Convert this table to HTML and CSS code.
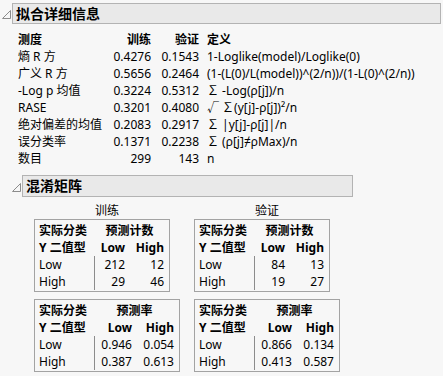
FILE: index.html
```html
<!DOCTYPE html>
<html>
<head>
<meta charset="utf-8">
<link rel="stylesheet" href="styles.css">
</head>
<body>
<div class="outline">
  <div class="ohead">
    <svg class="tri" width="10" height="9" viewBox="0 0 10 9"><polygon points="8.5,0.5 8.5,8.5 0.5,8.5" fill="none" stroke="#8c8c8c" stroke-width="1"/></svg>
    <div class="obar">拟合详细信息</div>
  </div>
  <div class="obody">
    <table class="fit">
      <tr class="hd"><td class="c1">测度</td><td class="c2">训练</td><td class="c3">验证</td><td class="c4">定义</td></tr>
      <tr><td class="c1">熵 R 方</td><td class="c2">0.4276</td><td class="c3">0.1543</td><td class="c4">1-Loglike(model)/Loglike(0)</td></tr>
      <tr><td class="c1">广义 R 方</td><td class="c2">0.5656</td><td class="c3">0.2464</td><td class="c4">(1-(L(0)/L(model))^(2/n))/(1-L(0)^(2/n))</td></tr>
      <tr><td class="c1">-Log p 均值</td><td class="c2">0.3224</td><td class="c3">0.5312</td><td class="c4">∑ -Log(ρ[j])/n</td></tr>
      <tr><td class="c1">RASE</td><td class="c2">0.3201</td><td class="c3">0.4080</td><td class="c4">√ ∑(y[j]-ρ[j])²/n</td></tr>
      <tr><td class="c1">绝对偏差的均值</td><td class="c2">0.2083</td><td class="c3">0.2917</td><td class="c4">∑ |y[j]-ρ[j]|/n</td></tr>
      <tr><td class="c1">误分类率</td><td class="c2">0.1371</td><td class="c3">0.2238</td><td class="c4">∑ (ρ[j]≠ρMax)/n</td></tr>
      <tr><td class="c1">数目</td><td class="c2">299</td><td class="c3">143</td><td class="c4">n</td></tr>
    </table>

    <div class="outline sub">
      <div class="ohead">
        <svg class="tri" width="10" height="9" viewBox="0 0 10 9"><polygon points="8.5,0.5 8.5,8.5 0.5,8.5" fill="none" stroke="#8c8c8c" stroke-width="1"/></svg>
        <div class="obar short">混淆矩阵</div>
      </div>
      <div class="cm-grid">
        <div class="cm-label">训练</div>
        <div class="cm-label">验证</div>

        <div class="mbox counts">
          <div class="b">实际分类</div><div class="b span">预测计数</div>
          <div class="b">Y 二值型</div><div class="b r">Low</div><div class="b r">High</div>
          <div class="sep">Low</div><div class="r">212</div><div class="r">12</div>
          <div class="sep">High</div><div class="r">29</div><div class="r">46</div>
        </div>
        <div class="mbox counts">
          <div class="b">实际分类</div><div class="b span">预测计数</div>
          <div class="b">Y 二值型</div><div class="b r">Low</div><div class="b r">High</div>
          <div class="sep">Low</div><div class="r">84</div><div class="r">13</div>
          <div class="sep">High</div><div class="r">19</div><div class="r">27</div>
        </div>

        <div class="mbox rates">
          <div class="b">实际分类</div><div class="b span">预测率</div>
          <div class="b">Y 二值型</div><div class="b r">Low</div><div class="b r">High</div>
          <div class="sep">Low</div><div class="r">0.946</div><div class="r">0.054</div>
          <div class="sep">High</div><div class="r">0.387</div><div class="r">0.613</div>
        </div>
        <div class="mbox rates">
          <div class="b">实际分类</div><div class="b span">预测率</div>
          <div class="b">Y 二值型</div><div class="b r">Low</div><div class="b r">High</div>
          <div class="sep">Low</div><div class="r">0.866</div><div class="r">0.134</div>
          <div class="sep">High</div><div class="r">0.413</div><div class="r">0.587</div>
        </div>
      </div>
    </div>
  </div>
</div>
</body>
</html>
```
FILE: styles.css
```css
html, body {
  margin: 0;
  padding: 0;
  background: #f7f7f7;
}
body {
  font-family: "Noto Sans", "Noto Sans CJK SC", sans-serif;
  font-size: 12px;
  line-height: 17px;
  color: #000;
  padding-top: 3px;
  width: 443px;
  height: 376px;
  overflow: hidden;
  box-sizing: border-box;
}
.ohead {
  display: flex;
  align-items: flex-end;
  padding-left: 2px;
}
.tri {
  display: block;
  flex: none;
  margin-bottom: 5px;
}
.obar {
  flex: 1;
  height: 19px;
  line-height: 19px;
  margin-right: 2px;
  background: #e9e9e9;
  border: 1px solid #b3b3b3;
  padding-left: 3px;
  font-size: 14px;
  font-weight: bold;
}
.obar.short {
  flex: none;
  width: 326px;
  height: 20px;
  line-height: 20px;
}
.fit {
  border-collapse: collapse;
  margin: 7px 0 0 18px;
}
.fit td {
  padding: 0;
  height: 17px;
  white-space: nowrap;
}
.fit .hd td { font-weight: bold; }
.fit .c1 { width: 88px; }
.fit .c2 { width: 45px; text-align: right; }
.fit .c3 { width: 48px; text-align: right; }
.fit .c4 { padding-left: 8px; }

.outline.sub {
  margin-top: 8px;
  margin-left: 10px;
}
.cm-grid {
  display: grid;
  grid-template-columns: auto auto;
  column-gap: 14px;
  justify-content: start;
  align-items: start;
  margin: 5px 0 0 24px;
}
.cm-label {
  text-align: center;
  height: 17px;
}
.mbox {
  justify-self: start;
  display: grid;
  border: 1px solid #a3a3a3;
  padding: 2px 5px 1px 4px;
  margin-bottom: 7px;
  grid-auto-rows: 17px;
}
.mbox.counts { grid-template-columns: 56px 30px 39px; }
.mbox.rates { grid-template-columns: 56px 37px 42px; }
.mbox > div { white-space: nowrap; }
.mbox .b { font-weight: bold; }
.mbox .r { text-align: right; }
.mbox .span { grid-column: span 2; text-align: center; }
.mbox .sep {
  border-right: 1px solid #8c8c8c;
  box-sizing: border-box;
}
```
